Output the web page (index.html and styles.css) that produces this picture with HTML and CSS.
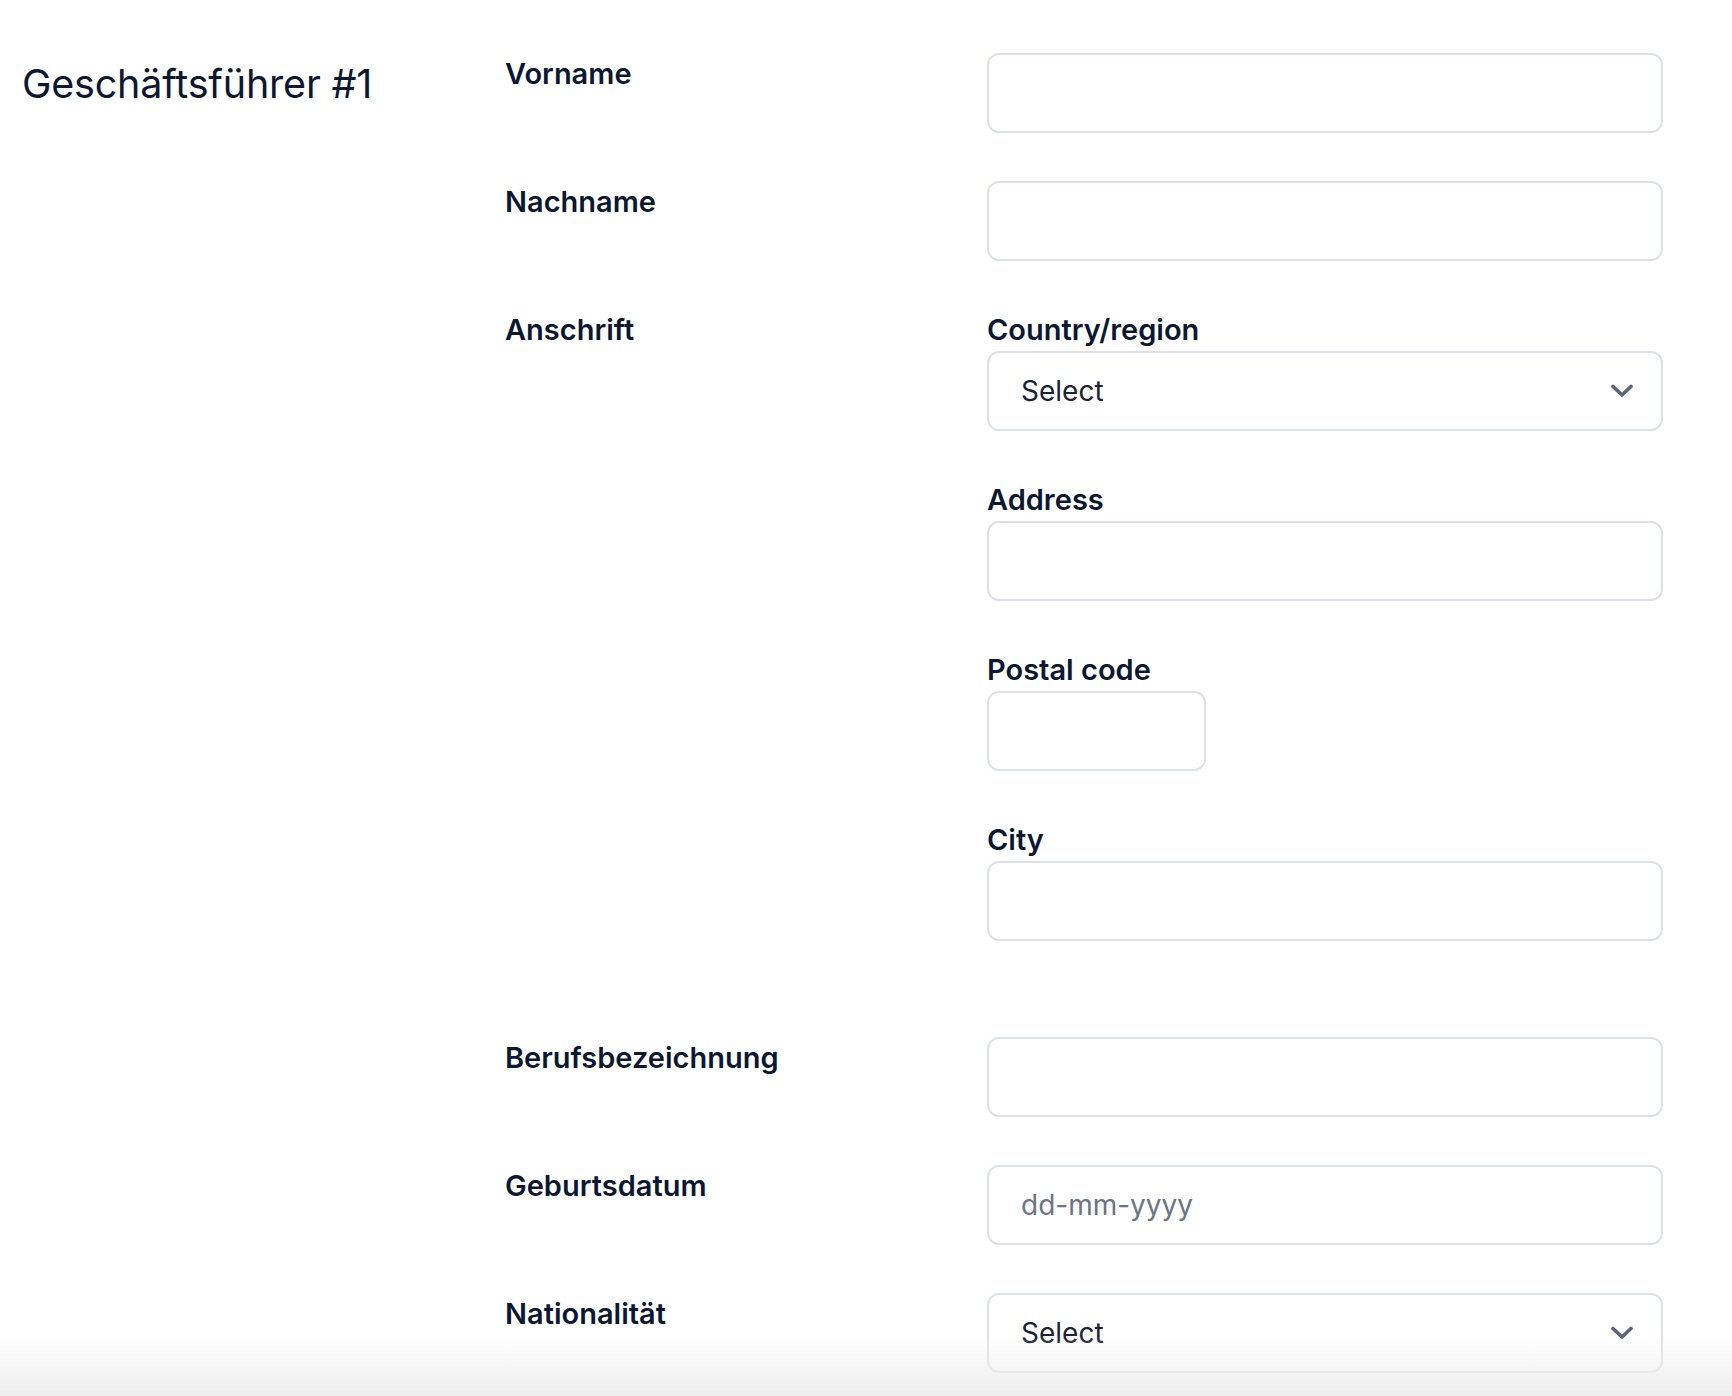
FILE: index.html
```html
<!DOCTYPE html>
<html lang="de">
<head>
<meta charset="utf-8">
<title>Geschäftsführer #1</title>
<link rel="stylesheet" href="styles.css">
</head>
<body>
<section class="section">
  <h2 class="section-title">Geschäftsführer #1</h2>
  <div class="form">
    <div class="row">
      <label class="row-label">Vorname</label>
      <div class="field"><input class="input" type="text"></div>
    </div>
    <div class="row">
      <label class="row-label">Nachname</label>
      <div class="field"><input class="input" type="text"></div>
    </div>
    <div class="row row-group">
      <label class="row-label">Anschrift</label>
      <div class="field subfields">
        <div class="subfield">
          <label class="sub-label">Country/region</label>
          <div class="select">
            <span class="select-value">Select</span>
            <svg class="chevron" width="22" height="14" viewBox="0 0 22 14"><path d="M2 2.5 L11 11 L20 2.5" fill="none" stroke="#5b6478" stroke-width="3.6" stroke-linecap="round" stroke-linejoin="round"/></svg>
          </div>
        </div>
        <div class="subfield">
          <label class="sub-label">Address</label>
          <input class="input" type="text">
        </div>
        <div class="subfield">
          <label class="sub-label">Postal code</label>
          <input class="input input-short" type="text">
        </div>
        <div class="subfield">
          <label class="sub-label">City</label>
          <input class="input" type="text">
        </div>
      </div>
    </div>
    <div class="row">
      <label class="row-label">Berufsbezeichnung</label>
      <div class="field"><input class="input" type="text"></div>
    </div>
    <div class="row">
      <label class="row-label">Geburtsdatum</label>
      <div class="field"><input class="input" type="text" placeholder="dd-mm-yyyy"></div>
    </div>
    <div class="row">
      <label class="row-label">Nationalität</label>
      <div class="field">
        <div class="select">
          <span class="select-value">Select</span>
          <svg class="chevron" width="22" height="14" viewBox="0 0 22 14"><path d="M2 2.5 L11 11 L20 2.5" fill="none" stroke="#5b6478" stroke-width="3.6" stroke-linecap="round" stroke-linejoin="round"/></svg>
        </div>
      </div>
    </div>
  </div>
</section>
<div class="bottom-fade"></div>
</body>
</html>
```

FILE: styles.css
```css
* { box-sizing: border-box; }

html, body {
  margin: 0;
  padding: 0;
  background: #ffffff;
  font-family: Inter, "Noto Sans", "Liberation Sans", sans-serif;
  color: #0c1731;
}

.section {
  display: flex;
  align-items: flex-start;
  padding: 53px 69px 0 22px;
}

.section-title {
  width: 483px;
  flex: none;
  margin: 6px 0 0 0;
  font-size: 39.5px;
  line-height: 50px;
  font-weight: 400;
  color: #0c1731;
  letter-spacing: -0.2px;
}

.form {
  flex: 1;
  display: flex;
  flex-direction: column;
  gap: 48px;
}

.row {
  display: grid;
  grid-template-columns: 482px 1fr;
  align-items: start;
}

.row-group {
  margin-bottom: 48px;
}

.row-label,
.sub-label {
  display: block;
  font-size: 29px;
  line-height: 40px;
  font-weight: 600;
  color: #0c1731;
}

.row-label {
  padding-top: 1px;
}

.sub-label {
  height: 42px;
  padding-top: 1px;
}

.subfields {
  display: flex;
  flex-direction: column;
  gap: 48px;
}

.subfield {
  display: flex;
  flex-direction: column;
}

.input,
.select {
  display: block;
  width: 100%;
  height: 80px;
  border: 2px solid #dde1e7;
  border-radius: 12px;
  background: #ffffff;
  padding: 0 32px;
  font-family: inherit;
  font-size: 28px;
  color: #1a2238;
  outline: none;
}

.input::placeholder {
  color: #6c7487;
  opacity: 1;
}

.input-short {
  width: 219px;
}

.select {
  position: relative;
  display: flex;
  align-items: center;
  justify-content: space-between;
  padding-right: 28px;
}

.select-value {
  font-size: 28px;
  color: #1a2238;
}

.chevron {
  display: block;
  flex: none;
}

.bottom-fade {
  position: fixed;
  left: 0;
  right: 0;
  bottom: 0;
  height: 60px;
  pointer-events: none;
  background: linear-gradient(to bottom, rgba(238, 238, 238, 0), rgba(238, 238, 238, 1));
}
```
